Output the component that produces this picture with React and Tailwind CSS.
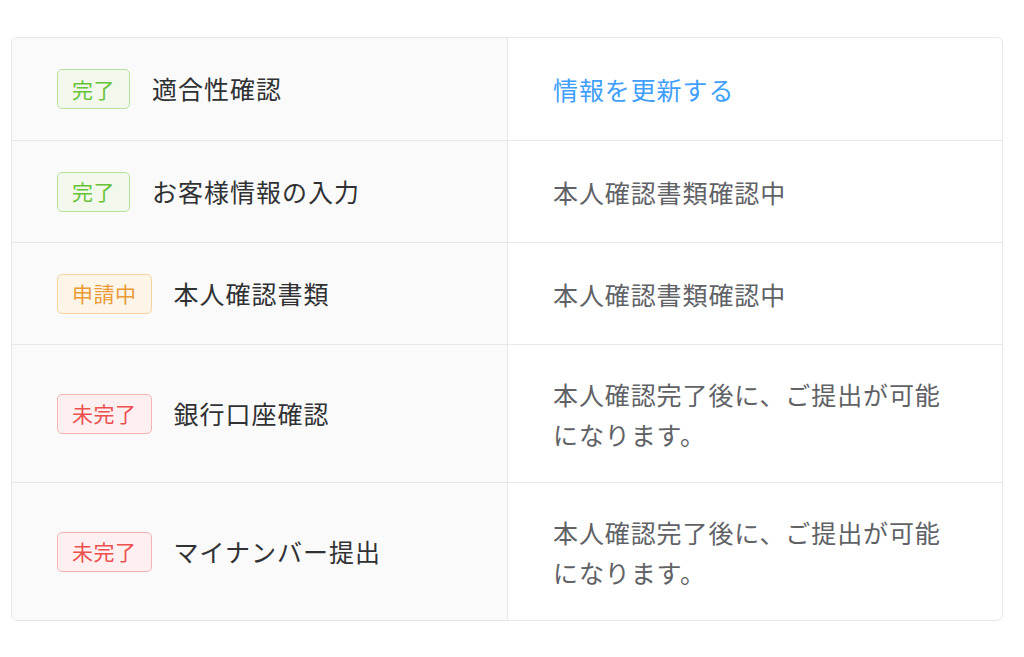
import React from 'react';

const rows = [
  { status: 'done', label: '適合性確認', note: '情報を更新する', link: true },
  { status: 'done', label: 'お客様情報の入力', note: '本人確認書類確認中' },
  { status: 'pending', label: '本人確認書類', note: '本人確認書類確認中' },
  { status: 'todo', label: '銀行口座確認', note: '本人確認完了後に、ご提出が可能になります。' },
  { status: 'todo', label: 'マイナンバー提出', note: '本人確認完了後に、ご提出が可能になります。' },
];

const badges = {
  done: { text: '完了', cls: 'bg-[#f2f9ec] border-[#b7e09f] text-[#67c23a]' },
  pending: { text: '申請中', cls: 'bg-[#fdf5e8] border-[#f6d49e] text-[#ea9a36]' },
  todo: { text: '未完了', cls: 'bg-[#fef0f0] border-[#f7b2b2] text-[#ec4f4f]' },
};

function Badge({ status }) {
  const b = badges[status];
  return (
    <span className={`inline-flex items-center h-[40px] px-[14px] rounded-[5px] border-[1.5px] text-[21px] tracking-[0.5px] leading-none ${b.cls}`}>
      {b.text}
    </span>
  );
}

export default function App() {
  return (
    <div
      className="min-h-[657px] bg-white pt-[37px] pl-[11px]"
      style={{ fontFamily: '"Noto Sans CJK JP", "Noto Sans", sans-serif' }}
    >
      <div className="w-[992px] border border-[#e4e7ed] rounded-[6px] overflow-hidden">
        {rows.map((r, i) => (
          <div
            key={i}
            className={`grid grid-cols-[496px_1fr] min-h-[102px] ${i > 0 ? 'border-t border-[#e6e8ec]' : ''}`}
          >
            <div className="bg-[#fafafa] border-r border-[#e6e8ec] pl-[45px] flex items-center gap-[22px]">
              <Badge status={r.status} />
              <span className="text-[25px] tracking-[1px] text-[#303133]">{r.label}</span>
            </div>
            <div className="pl-[45px] pr-[50px] py-[28.5px] flex items-center">
              <p
                className={`text-[25px] leading-[40px] tracking-[0.9px] ${r.link ? 'text-[#409eff]' : 'text-[#606266]'}`}
              >
                {r.note}
              </p>
            </div>
          </div>
        ))}
      </div>
    </div>
  );
}
